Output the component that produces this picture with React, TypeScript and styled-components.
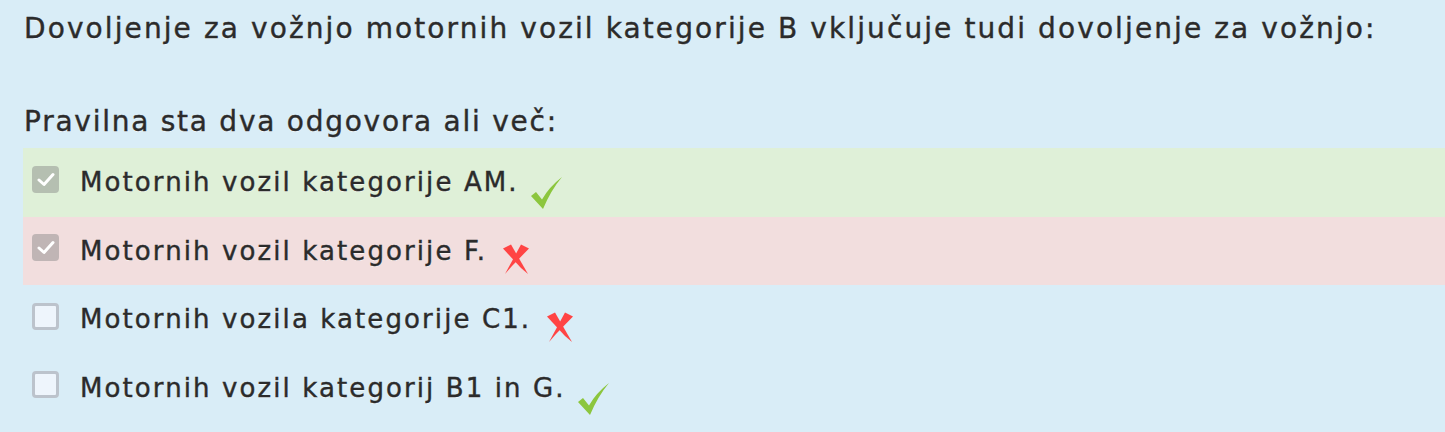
import React from "react";
import styled, { createGlobalStyle, css } from "styled-components";

type AnswerState = "correct" | "wrong" | "none";

type Answer = {
    text: string;
    checked: boolean;
    state: AnswerState;
    isRight: boolean;
};

const ANSWERS: Answer[] = [
    { text: "Motornih vozil kategorije AM.", checked: true, state: "correct", isRight: true },
    { text: "Motornih vozil kategorije F.", checked: true, state: "wrong", isRight: false },
    { text: "Motornih vozila kategorije C1.", checked: false, state: "none", isRight: false },
    { text: "Motornih vozil kategorij B1 in G.", checked: false, state: "none", isRight: true },
];

const GlobalStyle = createGlobalStyle`
    html, body {
        margin: 0;
        padding: 0;
        background: #d9edf7;
    }
    body {
        font-family: "DejaVu Sans", "Liberation Sans", sans-serif;
        color: #2b2b2b;
    }
`;

const ROW_BG: Record<AnswerState, string> = {
    correct: "#dff0d8",
    wrong: "#f2dede",
    none: "transparent",
};

const textLook = css`
    -webkit-text-stroke: 0.4px #2b2b2b;
    text-shadow: 0 1px 0 rgba(255, 255, 255, 0.6);
    white-space: nowrap;
`;

export default function App() {
    return (
        <>
            <GlobalStyle />
            <Panel>
                <Question>Dovoljenje za vožnjo motornih vozil kategorije B vključuje tudi dovoljenje za vožnjo:</Question>
                <Hint>Pravilna sta dva odgovora ali več:</Hint>
                <AnswerList>
                    {ANSWERS.map((a) => (
                        <AnswerRow key={a.text} state={a.state}>
                            <Box checked={a.checked}>
                                {a.checked && (
                                    <svg width="18" height="15" viewBox="0 0 18 15">
                                        <path d="M2 8 L7 12.5 L16 2.5" fill="none" stroke="#ffffff" strokeWidth="3" strokeLinecap="round" strokeLinejoin="round" />
                                    </svg>
                                )}
                            </Box>
                            <AnswerText>{a.text}</AnswerText>
                            <Mark right={a.isRight}>{a.isRight ? <TickIcon /> : <CrossIcon />}</Mark>
                        </AnswerRow>
                    ))}
                </AnswerList>
            </Panel>
        </>
    );
}

function TickIcon() {
    return (
        <svg width="31" height="32" viewBox="0 0 31 32">
            <path d="M0 19 L5 15 L11 22.5 Q18 10 31 0 Q20 13 12 32 Z" fill="#8cc63e" />
        </svg>
    );
}

function CrossIcon() {
    return (
        <svg width="26" height="30" viewBox="0 0 26 30">
            <path d="M0 4.5 L8 0.5 L25 30 L18 24 Z" fill="#ff4444" />
            <path d="M18 0.5 L26 4.5 L9 22 L2 30 Z" fill="#ff4444" />
        </svg>
    );
}

const Panel = styled.div`
    padding: 12px 0 0 23px;
    height: 432px;
    box-sizing: border-box;
    overflow: hidden;
`;

const Question = styled.p`
    margin: 0;
    padding-left: 1px;
    font-size: 28px;
    line-height: 34px;
    letter-spacing: 2.1px;
    ${textLook}
`;

const Hint = styled.p`
    margin: 59px 0 0;
    padding-left: 1px;
    font-size: 28px;
    line-height: 34px;
    letter-spacing: 1.75px;
    ${textLook}
`;

const AnswerList = styled.div`
    display: flex;
    flex-direction: column;
    margin-top: 9px;
`;

const AnswerRow = styled.div<{ state: AnswerState }>`
    display: flex;
    align-items: center;
    height: 68.5px;
    padding-left: 9px;
    background: ${({ state }) => ROW_BG[state]};
`;

const Box = styled.span<{ checked: boolean }>`
    flex: none;
    display: flex;
    align-items: center;
    justify-content: center;
    width: 27px;
    height: 27px;
    box-sizing: border-box;
    margin-top: -6px;
    border-radius: 4px;
    background: ${({ checked }) => (checked ? "rgba(130, 130, 130, 0.45)" : "#eef5fc")};
    border: ${({ checked }) => (checked ? "none" : "3px solid #bcc3cc")};
`;

const AnswerText = styled.span`
    margin-left: 21px;
    font-size: 26px;
    line-height: 34px;
    letter-spacing: 2.1px;
    ${textLook}
`;

const Mark = styled.span<{ right: boolean }>`
    display: flex;
    margin-left: ${({ right }) => (right ? "12px" : "16px")};
    margin-top: ${({ right }) => (right ? "22px" : "16px")};
`;
